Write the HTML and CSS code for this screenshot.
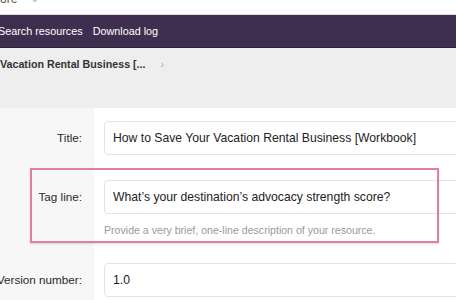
FILE: index.html
```html
<!DOCTYPE html>
<html>
  <head>
    <title>Edit resource</title>
    <link rel="stylesheet" href="styles.css">
  </head>
  <body>
    <div class="topbar">
      <span class="store">ore</span>
      <span class="caret">&#8964;</span>
    </div>

    <nav class="nav">
      <a href="#" class="first">Search resources</a>
      <a href="#">Download log</a>
    </nav>

    <div class="crumbs">
      <span class="crumb">Vacation Rental Business [...</span>
      <span class="sep">&rsaquo;</span>
    </div>

    <form class="form">
      <div class="row">
        <label class="label" for="title">Title:</label>
        <div class="field">
          <input type="text" id="title" class="input" value="How to Save Your Vacation Rental Business [Workbook]" />
        </div>
      </div>

      <div class="row row-tag">
        <label class="label" for="tagline">Tag line:</label>
        <div class="field">
          <input type="text" id="tagline" class="input" value="What’s your destination’s advocacy strength score?" />
          <p class="help">Provide a very brief, one-line description of your resource.</p>
        </div>
        <div class="highlight"></div>
      </div>

      <div class="row">
        <label class="label" for="version">Version number:</label>
        <div class="field">
          <input type="text" id="version" class="input" value="1.0" />
        </div>
      </div>
    </form>
  </body>
</html>
```

FILE: styles.css
```css
body {
  margin: 0;
  font-family: "Liberation Sans", Arial, sans-serif;
  color: #333;
  background-color: #fff;
  overflow: hidden;
}
.topbar {
  height: 14px;
  border-bottom: 1px solid #e4d8de;
  font-size: 12px;
  line-height: 10px;
  color: #555;
  overflow: hidden;
}
.store {
  display: inline-block;
  margin-top: -6px;
  vertical-align: top;
}
.caret {
  display: inline-block;
  margin-left: 10px;
  margin-top: -6px;
  vertical-align: top;
  font-size: 9px;
  color: #999;
}
.nav {
  display: flex;
  gap: 10px;
  height: 32px;
  align-items: center;
  background-color: #3f2e4f;
  border-bottom: 1px solid #2c2038;
}
.nav a {
  color: #fff;
  font-size: 10.8px;
  text-decoration: none;
}
.nav .first {
  margin-left: -2px;
}
.crumbs {
  height: 60px;
  padding-top: 10px;
  box-sizing: border-box;
  background-color: #eeeeee;
  font-size: 10.7px;
}
.crumb {
  font-weight: bold;
  color: #333;
}
.sep {
  margin-left: 12px;
  color: #aaa;
}
.form {
  margin: 0;
}
.row {
  position: relative;
  display: grid;
  grid-template-columns: 94px 1fr;
}
.label {
  display: flex;
  justify-content: flex-end;
  padding: 13px 12px 12px 0;
  background-color: #f7f7f7;
  font-size: 11.7px;
  line-height: 34px;
  white-space: nowrap;
  color: #2a2a2a;
}
.field {
  padding: 13px 0 12px 10px;
}
.row-tag .label,
.row-tag .field {
  padding-bottom: 13px;
}
.input {
  display: block;
  box-sizing: border-box;
  width: 380px;
  height: 34px;
  padding: 0 8px;
  border: 1px solid #e3e3e3;
  border-radius: 4px;
  font-family: "Liberation Sans", Arial, sans-serif;
  font-size: 12.2px;
  color: #222;
  background-color: #fff;
}
.help {
  margin: 10px 0 0 0;
  font-size: 10.6px;
  line-height: 13px;
  color: #9a9a9a;
}
.highlight {
  position: absolute;
  left: 30px;
  top: 1px;
  width: 409px;
  height: 75px;
  box-sizing: border-box;
  border: 2px solid #e0809e;
  box-shadow: 0 1px 2px rgba(0, 0, 0, 0.15);
  pointer-events: none;
}
```
